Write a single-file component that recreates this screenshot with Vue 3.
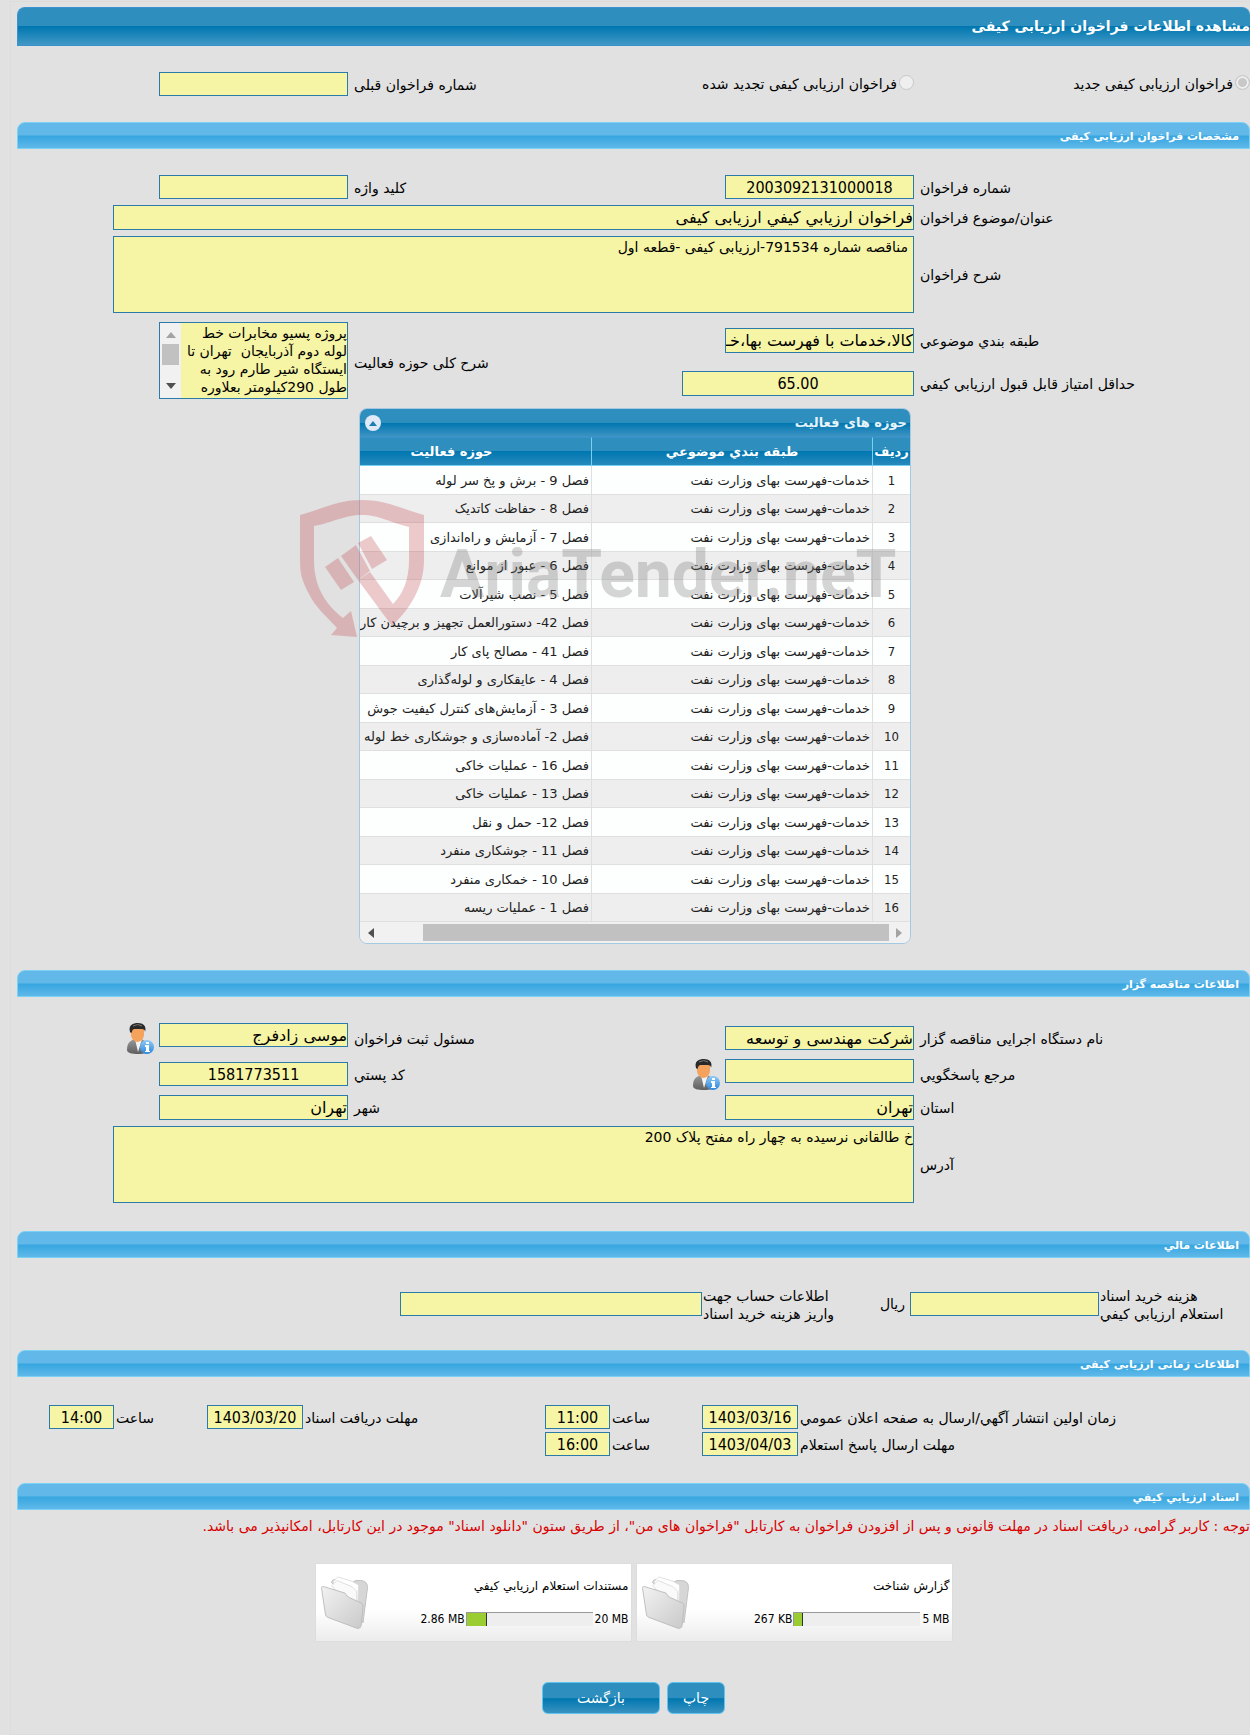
<template>
  <div class="page" dir="rtl">
    <h1 class="main-bar">مشاهده اطلاعات فراخوان ارزیابی کیفی</h1>

    <div class="section-body form-grid">
      <label class="radio"><input type="radio" name="kind" checked disabled />فراخوان ارزیابی کیفی جدید</label>
      <label class="radio"><input type="radio" name="kind" disabled />فراخوان ارزیابی کیفی تجدید شده</label>
      <label class="label" for="prev">شماره فراخوان قبلی</label>
      <div class="cell"><input id="prev" class="field" readonly /></div>
    </div>

    <h2 class="bar">مشخصات فراخوان ارزیابی کیفی</h2>
    <div class="section-body">
      <div class="form-grid call-grid">
        <label class="label" for="number">شماره فراخوان</label>
        <div class="cell"><input id="number" class="field center" value="2003092131000018" readonly /></div>
        <label class="label" for="keyword">کلید واژه</label>
        <div class="cell"><input id="keyword" class="field" readonly /></div>

        <label class="label" for="subject">عنوان/موضوع فراخوان</label>
        <div class="cell wide"><input id="subject" class="field tall" value="فراخوان ارزيابي كيفي ارزیابی کیفی" readonly /></div>

        <label class="label" for="desc">شرح فراخوان</label>
        <div class="cell wide">
          <textarea id="desc" class="area padded" readonly>مناقصه شماره 791534-ارزیابی کیفی -قطعه اول</textarea>
        </div>
      </div>

      <div class="form-grid scope-grid">
        <label class="label" for="category">طبقه بندي موضوعي</label>
        <div class="cell"><input id="category" class="field tall" value="کالا،خدمات با فهرست بها،خـ" readonly /></div>
        <label class="label span-rows" for="scope">شرح کلی حوزه فعالیت</label>
        <div class="cell span-rows top">
          <div class="scroll-area">
            <textarea id="scope" v-model="scope" class="area" readonly></textarea>
            <div class="scroll-y">
              <svg class="arrow off" viewBox="0 0 10 6"><path d="M0 6 5 0l5 6z" /></svg>
              <span class="thumb-y"></span>
              <svg class="arrow" viewBox="0 0 10 6"><path d="M0 0 5 6l5-6z" /></svg>
            </div>
          </div>
        </div>
        <label class="label" for="score">حداقل امتياز قابل قبول ارزيابي كيفي</label>
        <div class="cell"><input id="score" class="field tall score center" value="65.00" readonly /></div>
      </div>

      <div class="grid-holder">
        <div class="data-grid">
          <div class="grid-caption">
            <span>حوزه های فعالیت</span>
            <button class="collapse" aria-label="جمع کردن">
              <svg viewBox="0 0 10 6"><path d="M0 6 5 0l5 6z" /></svg>
            </button>
          </div>
          <div class="grid-view">
            <table>
              <colgroup>
                <col class="col-index" />
                <col class="col-category" />
                <col />
              </colgroup>
              <thead>
                <tr>
                  <th>ردیف</th>
                  <th>طبقه بندي موضوعي</th>
                  <th class="activity-head">حوزه فعالیت</th>
                </tr>
              </thead>
              <tbody>
                <tr v-for="(item, i) in activities" :key="i">
                  <td class="index">{{ i + 1 }}</td>
                  <td>خدمات-فهرست بهای وزارت نفت</td>
                  <td>{{ item }}</td>
                </tr>
              </tbody>
            </table>
          </div>
          <div class="scroll-x">
            <svg class="arrow-x off" viewBox="0 0 6 10"><path d="M0 0v10l6-5z" /></svg>
            <span class="thumb-x"></span>
            <svg class="arrow-x last" viewBox="0 0 6 10"><path d="M6 0v10L0 5z" /></svg>
          </div>

          <div class="watermark" dir="ltr">
            <svg width="124" height="137" viewBox="0 0 124 137">
              <path d="M57 137 31 135l6-7C28 118 15 107 9 94 2 80 0 75 0 60V15C25 8 38 0 62 0s37 8 62 15v45c0 26-13 48-32 66L58 80l12-8 23 32c10-10 16-24 16-44V27C88 22 80 15 62 15S35 22 14 26v34c0 25 10 43 29 58l8-7z" />
              <path d="m25 67 13-9 16 24-13 8zM41 56l15-11 14 26-12 9zM58 43l13-7 16 24-15 9z" />
            </svg>
            <span>AriaTender.neT</span>
          </div>
        </div>
      </div>
    </div>

    <h2 class="bar">اطلاعات مناقصه گزار</h2>
    <div class="section-body">
      <div class="form-grid owner-grid">
        <label class="label" for="org">نام دستگاه اجرایی مناقصه گزار</label>
        <div class="cell"><input id="org" class="field" value="شرکت مهندسی و توسعه" readonly /></div>
        <label class="label" for="officer">مسئول ثبت فراخوان</label>
        <div class="cell top">
          <input id="officer" class="field" value="موسی زادفرج" readonly />
          <button class="person" aria-label="اطلاعات مسئول"><svg viewBox="0 0 28 31"><use href="#person" /></svg></button>
        </div>

        <label class="label" for="contact">مرجع پاسخگويي</label>
        <div class="cell top">
          <input id="contact" class="field" readonly />
          <button class="person" aria-label="اطلاعات مرجع"><svg viewBox="0 0 28 31"><use href="#person" /></svg></button>
        </div>
        <label class="label" for="postal">كد پستي</label>
        <div class="cell"><input id="postal" class="field center" value="1581773511" readonly /></div>

        <label class="label" for="province">استان</label>
        <div class="cell"><input id="province" class="field tall" value="تهران" readonly /></div>
        <label class="label" for="city">شهر</label>
        <div class="cell"><input id="city" class="field tall" value="تهران" readonly /></div>

        <label class="label" for="address">آدرس</label>
        <div class="cell wide"><textarea id="address" class="area" readonly>خ طالقانی نرسیده به چهار راه مفتح پلاک 200</textarea></div>
      </div>
    </div>

    <h2 class="bar">اطلاعات مالي</h2>
    <div class="section-body money-grid">
      <label class="label" for="fee">هزینه خرید اسناد<br />استعلام ارزيابي كيفي</label>
      <div class="cell"><input id="fee" class="field" readonly /><span class="unit">ریال</span></div>
      <label class="label" for="account">اطلاعات حساب جهت<br />واریز هزینه خرید اسناد</label>
      <div class="cell"><input id="account" class="field account" readonly /></div>
    </div>

    <h2 class="bar">اطلاعات زمانی ارزیابی کیفی</h2>
    <div class="section-body">
      <div class="time-grid">
        <template v-for="t in times" :key="t.id">
          <label class="label" :for="t.id + '-date'">{{ t.label }}</label>
          <input :id="t.id + '-date'" class="field center" dir="ltr" :value="t.date" readonly />
          <label class="label" :for="t.id + '-hour'">ساعت</label>
          <input :id="t.id + '-hour'" class="field center" :value="t.hour" readonly />
          <span v-if="t.id === 'docs'"></span>
        </template>
      </div>
    </div>

    <h2 class="bar">اسناد ارزيابي كيفي</h2>
    <p class="note">توجه : کاربر گرامی، دریافت اسناد در مهلت قانونی و پس از افزودن فراخوان به کارتابل "فراخوان های من"، از طریق ستون "دانلود اسناد" موجود در این کارتابل، امکانپذیر می باشد.</p>

    <div class="cards">
      <div v-for="file in files" :key="file.title" class="card">
        <div class="card-info">
          <span class="card-title">{{ file.title }}</span>
          <div class="usage" dir="ltr">
            <span>{{ file.used }}</span>
            <span class="meter"><i :style="{ width: file.percent + '%' }"></i></span>
            <span class="limit">{{ file.limit }}</span>
          </div>
        </div>
        <svg class="folder" viewBox="0 0 54 60">
          <path d="M12 7q1-4 6-3l17 3q4-3 9-2 8 0 8 8l-5 39-7-14z" fill="#d6d6d6" stroke="#bdbdbd" />
          <path d="m14 6 5-5 16 5 7 4-1 26-24-12z" fill="#fff" stroke="#dedede" />
          <path d="m12 11 6-6 17 7 5 5v22z" fill="#fafafa" stroke="#dcdcdc" />
          <path d="M1 14q-1-3 3-2l23 7q2 4 5 5l13 6q3 1 2 5l-2 20q-1 4-5 3L8 46q-3-1-3-5z" fill="url(#front)" stroke="#bababa" />
        </svg>
      </div>
    </div>

    <div class="actions">
      <button class="btn">چاپ</button>
      <button class="btn back">بازگشت</button>
    </div>

    <svg class="defs" aria-hidden="true">
      <defs>
        <linearGradient id="front" x1="0" y1="0" x2="1" y2="1">
          <stop offset="0" stop-color="#f2f2f2" />
          <stop offset="1" stop-color="#c9c9c9" />
        </linearGradient>
        <linearGradient id="suit" x1="0" y1="0" x2="0" y2="1">
          <stop offset="0" stop-color="#999" />
          <stop offset="1" stop-color="#5f5f5f" />
        </linearGradient>
        <linearGradient id="badge" x1="0" y1="0" x2="0" y2="1">
          <stop offset="0" stop-color="#8ecbf7" />
          <stop offset="1" stop-color="#2b86dc" />
        </linearGradient>
        <symbol id="person" viewBox="0 0 28 31">
          <path d="M1 27c0-6 2-9 8-11h6c5 2 8 5 8 11 0 3-5 4-11 4S1 30 1 27z" fill="url(#suit)" />
          <path d="m9 16 3 13 4-13z" fill="#f4f4f8" />
          <path d="M5 6c0-5 13-5 13 0v6c0 3-3 7-6.500 7S5 15 5 12z" fill="#f5a35c" />
          <path d="M4 9C2 2 7 0 12 0s9 3 7 9c0-3-2-3-5-3-4 0-8-1-8 3l-1 1z" fill="#292929" />
          <path d="M7 3q5-3 9 0" fill="none" stroke="#777" />
          <circle cx="21" cy="24" r="7" fill="url(#badge)" />
          <path d="M20 19h3v2h-3zM19 22h4v6h1v1h-5v-1h1v-4h-1z" fill="#fff" />
        </symbol>
      </defs>
    </svg>
  </div>
</template>

<script setup>
import { ref } from 'vue'

const scope = ref([
  'پروژه پسیو مخابرات خط',
  'لوله دوم آذربایجان  تهران تا',
  'ایستگاه شیر طارم رود به',
  'طول 290کیلومتر بعلاوره'
].join('\n'))

const activities = [
  'فصل 9 - برش و پخ سر لوله',
  'فصل 8 - حفاظت کاتدیک',
  'فصل 7 - آزمایش و راه‌اندازی',
  'فصل 6 - عبور از موانع',
  'فصل 5 - نصب شیرآلات',
  'فصل 42- دستورالعمل تجهیز و برچیدن کار',
  'فصل 41 - مصالح پای کار',
  'فصل 4 - عایقکاری و لوله‌گذاری',
  'فصل 3 - آزمایش‌های کنترل کیفیت جوش',
  'فصل 2- آماده‌سازی و جوشکاری خط لوله',
  'فصل 16 - عملیات خاکی',
  'فصل 13 - عملیات خاکی',
  'فصل 12- حمل و نقل',
  'فصل 11 - جوشکاری منفرد',
  'فصل 10 - خمکاری منفرد',
  'فصل 1 - عملیات ریسه'
]

const times = [
  { id: 'publish', label: 'زمان اولین انتشار آگهي/ارسال به صفحه اعلان عمومي', date: '1403/03/16', hour: '11:00' },
  { id: 'docs', label: 'مهلت دریافت اسناد', date: '1403/03/20', hour: '14:00' },
  { id: 'reply', label: 'مهلت ارسال پاسخ استعلام', date: '1403/04/03', hour: '16:00' }
]

const files = [
  { title: 'گزارش شناخت', used: '267 KB', limit: '5 MB', percent: 7 },
  { title: 'مستندات استعلام ارزيابي كيفي', used: '2.86 MB', limit: '20 MB', percent: 16 }
]
</script>

<style>
body {
  margin: 0;
  background: #e1e1e1;
}
</style>

<style scoped>
.page,
.page button,
.page input,
.page textarea {
  font-family: Tahoma, "DejaVu Sans", sans-serif;
}

.page .center,
.page .index,
.page .usage {
  font-family: Tahoma, "DejaVu Sans Condensed", "DejaVu Sans", sans-serif;
}

.page {
  margin: 1px 0 0 10px;
  padding: 5px 0 20px 6px;
  border: 1px solid #dcdcdc;
  border-right: none;
  font-size: 14px;
  line-height: 18px;
  color: #000;
  overflow: hidden;
}

.page *,
.page {
  box-sizing: border-box;
}

.main-bar,
.bar {
  margin: 0;
  color: #fff;
  font-weight: bold;
  border-radius: 8px 8px 0 0;
}

.main-bar {
  height: 39px;
  border: 1px solid #3a93d0;
  border-right: none;
  font-size: 14px;
  line-height: 37px;
  background: linear-gradient(#2e8fbe 50%, #0077b0 50%, #4198c5);
}

.bar {
  height: 27px;
  padding: 2px 10px 0;
  border: 1px solid #79d1f5;
  font-size: 11px;
  line-height: 24px;
  background: linear-gradient(#62b9e9 48%, #37a6e0 52%, #5fb8e9);
}

.section-body {
  padding: 26px 0;
}

.form-grid {
  display: grid;
  grid-template-columns: 330fr 350fr 204fr 331fr;
  gap: 6px;
  align-items: center;
}

.call-grid {
  grid-template-rows: 24px 25px 77px;
}

.scope-grid {
  grid-template-rows: 37px 37px;
  margin: 9px 0 6px;
}

.owner-grid {
  grid-template-rows: 30px 30px 25px 77px;
  padding-bottom: 2px;
}

.cell {
  display: flex;
  align-items: center;
  gap: 5px;
  min-width: 0;
}

.wide {
  grid-column: 2 / 5;
  margin-left: 96px;
}

.top {
  align-self: start;
  align-items: flex-start;
}

.span-rows {
  grid-row: 1 / 3;
}

.label.span-rows {
  grid-column: 3;
}

.cell.span-rows {
  grid-column: 4;
}

.label {
  padding-top: 1px;
  text-align: left;
}

.radio {
  display: flex;
  align-items: center;
  gap: 2px;
  white-space: nowrap;
}

.radio input {
  appearance: none;
  width: 15px;
  height: 15px;
  margin: 0 0 4px;
  border: 1px solid #c8c8c8;
  border-radius: 50%;
  background: #efefef;
}

.radio input:checked {
  background: #c8c8c8;
  border-color: #c8c8c8;
  box-shadow: inset 0 0 0 2px #efefef;
}

.field,
.area {
  width: 189px;
  margin: 0;
  border: 1px solid #2a7ba9;
  border-radius: 0;
  background: #f6f4a5;
  color: #000;
  outline: none;
}

.field {
  height: 24px;
  padding: 0;
  font-size: 16px;
}

.tall {
  height: 25px;
}

.center {
  text-align: center;
}

.score {
  width: 232px;
}

.account {
  width: 302px;
}

.wide .field,
.wide .area,
.time-grid .field {
  width: 100%;
}

.area {
  display: block;
  height: 77px;
  padding: 1px 0;
  font-size: 14px;
  line-height: 18px;
  resize: none;
  overflow: hidden;
}

.padded {
  padding: 1px 5px;
}

.scroll-area {
  display: flex;
  width: 189px;
  height: 77px;
  border: 1px solid #2a7ba9;
}

.scroll-area .area {
  flex: 1;
  min-width: 0;
  height: 75px;
  border: none;
  white-space: pre;
}

.scroll-y {
  display: flex;
  flex-direction: column;
  align-items: center;
  width: 21px;
  padding: 9px 0;
  background: #f1f1f1;
}

.arrow {
  width: 10px;
  height: 6px;
  fill: #505050;
}

.arrow.off,
.arrow-x.off {
  fill: #a3a3a3;
}

.thumb-y {
  width: 17px;
  height: 21px;
  margin: 6px 0 auto;
  background: #c1c1c1;
}

.grid-holder {
  display: flex;
  justify-content: center;
  padding-left: 3px;
}

.data-grid {
  position: relative;
  width: 552px;
  border: 1px solid #a6c9e2;
  border-radius: 8px;
}

.grid-caption {
  display: flex;
  align-items: center;
  justify-content: space-between;
  height: 28px;
  padding: 0 3px 0 5px;
  border-radius: 7px 7px 0 0;
  color: #e6f3fa;
  font-size: 13px;
  font-weight: bold;
  background: linear-gradient(#2e8fbe 48%, #0077b0 50%, #4094c3);
}

.collapse {
  display: flex;
  align-items: center;
  justify-content: center;
  width: 16px;
  height: 16px;
  padding: 0;
  border: none;
  border-radius: 8px;
  background: #dfeaf6;
}

.collapse svg {
  width: 8px;
  height: 5px;
  fill: #1b7fb3;
}

.grid-view {
  overflow: hidden;
}

table {
  width: 100%;
  table-layout: fixed;
  border-collapse: separate;
  border-spacing: 0;
}

.col-index {
  width: 37px;
}

.col-category {
  width: 281px;
}

thead tr {
  background: linear-gradient(#2e8fbe 50%, #0077b0 50%, #2a8bbd);
}

th {
  height: 29px;
  padding: 0;
  border-top: 1px solid #3a93cf;
  border-bottom: 1px solid #78d0f4;
  color: #fff;
  font-size: 13px;
  font-weight: bold;
  text-align: center;
  white-space: nowrap;
  overflow: hidden;
}

th + th {
  border-right: 1px solid #78d0f4;
}

.activity-head {
  padding-right: 48px;
}

td {
  height: 28px;
  padding: 1px 2px 0;
  border-bottom: 1px solid #dfdfdf;
  background: #eee;
  color: #222;
  font-size: 13px;
  white-space: nowrap;
  overflow: hidden;
}

td + td {
  border-right: 1px solid #dfdfdf;
}

tbody tr:nth-child(odd) td {
  height: 29px;
  background: #fdfffe;
}

.index {
  text-align: center;
}

.scroll-x {
  display: flex;
  align-items: center;
  height: 21px;
  padding: 0 8px;
  border-radius: 0 0 7px 7px;
  background: #f1f1f1;
}

.arrow-x {
  width: 6px;
  height: 10px;
  fill: #505050;
}

.arrow-x.last {
  margin-right: auto;
}

.thumb-x {
  width: 466px;
  height: 17px;
  margin-right: 7px;
  background: #c1c1c1;
}

.watermark {
  position: absolute;
  top: 91px;
  left: -60px;
  display: flex;
  align-items: center;
  gap: 16px;
  pointer-events: none;
}

.watermark svg {
  fill: #c03c46;
  opacity: 0.27;
}

.watermark span {
  margin-top: 12px;
  color: #777;
  font-family: Roboto, "Liberation Sans", sans-serif;
  font-size: 66px;
  font-weight: bold;
  line-height: 96px;
  opacity: 0.3;
}

.person {
  width: 28px;
  height: 31px;
  padding: 0;
  border: none;
  background: none;
}

.person svg {
  display: block;
  width: 28px;
  height: 31px;
}

.money-grid {
  display: grid;
  grid-template-columns: 150fr 217fr 178fr 685fr;
  grid-template-rows: 40px;
  gap: 1px;
  align-items: center;
}

.time-grid {
  display: grid;
  grid-template-columns: 450fr 96fr 88fr 65fr 238fr 96fr 89fr 65fr 30fr;
  gap: 3px 2px;
  align-items: center;
  padding: 2px 0 1px;
}

.note {
  margin: 7px 0 28px;
  color: #d90000;
  white-space: nowrap;
}

.cards {
  display: flex;
  justify-content: center;
  gap: 4px;
}

.card {
  display: flex;
  align-items: center;
  width: 317px;
  height: 79px;
  padding: 0 2px;
  border: 1px solid #ddd;
  background: linear-gradient(#fff 60%, #ececec);
  font-size: 12px;
}

.card-info {
  flex: 1;
}

.card-title {
  display: block;
  margin-bottom: 15px;
}

.usage {
  display: flex;
  align-items: center;
  justify-content: flex-end;
  gap: 1px;
}

.meter {
  display: flex;
  width: 127px;
  height: 14px;
  border: 1px solid #999;
  border-right: none;
  border-bottom: none;
  background: #eee;
}

.meter i {
  border-right: 1px solid #333;
  background: #9acd32;
}

.limit {
  margin-left: 1px;
}

.folder {
  width: 54px;
  height: 54px;
}

.actions {
  display: flex;
  justify-content: center;
  gap: 7px;
  margin-top: 40px;
}

.btn {
  width: 58px;
  height: 32px;
  padding: 0;
  border: 1px solid #5fc4ee;
  border-radius: 6px;
  color: #fff;
  font-size: 14px;
  background: linear-gradient(#2e8fbe 50%, #0077b0 52%, #3a92c1);
}

.back {
  width: 118px;
}

.defs {
  position: absolute;
  width: 0;
  height: 0;
}
</style>
